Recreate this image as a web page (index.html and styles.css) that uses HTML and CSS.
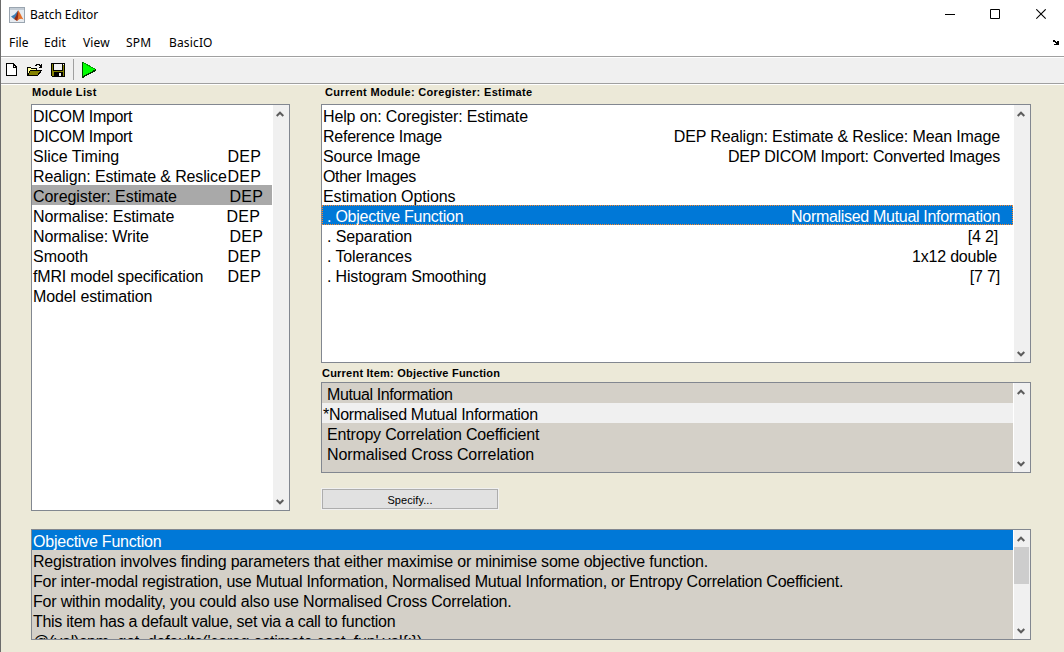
FILE: index.html
```html
<!DOCTYPE html>
<html lang="en">
<head>
<meta charset="utf-8">
<title>Batch Editor</title>
<link rel="stylesheet" href="styles.css">
</head>
<body>
<svg width="0" height="0" class="defs" aria-hidden="true">
  <symbol id="up" viewBox="0 0 8 6"><path d="M.7 5 4 1.7 7.3 5" fill="none" stroke="#5c5c5c" stroke-width="2"/></symbol>
  <symbol id="down" viewBox="0 0 8 6"><path d="M.7 1 4 4.3 7.3 1" fill="none" stroke="#5c5c5c" stroke-width="2"/></symbol>
</svg>
<div class="window">
  <header class="titlebar">
    <svg class="logo" width="16" height="16" viewBox="0 0 16 16">
      <rect x=".5" y=".5" width="15" height="15" fill="#e6ebf0" stroke="#9aa5b0"/>
      <path d="M1 1h14v2H1z" fill="#c3ccd5"/>
      <path d="M2 9.500 5.500 7.500 9 3.500 8 9l-3 3z" fill="#3f7fb5"/>
      <path d="M5 12 7 9l2-5.500 1.500 3.500-.5 4.500L8 14z" fill="#8e2b16"/>
      <path d="M9 3c2 2 3.500 7 5.500 9.500C12 11 10.500 11.500 8 14c1.500-4 1.300-7 1-11z" fill="#e5702a"/>
    </svg>
    <h1 class="title">Batch Editor</h1>
    <div class="controls">
      <svg width="11" height="11" viewBox="0 0 11 11"><path d="M0 5.500h10" stroke="#000"/></svg>
      <svg width="11" height="11" viewBox="0 0 11 11"><path d="M.5.5h9v9h-9z" fill="none" stroke="#000"/></svg>
      <svg width="11" height="11" viewBox="0 0 11 11"><path d="M.3.3l9.400 9.400M9.700.3.3 9.700" stroke="#000" stroke-width="1.100" fill="none"/></svg>
    </div>
  </header>
  <nav class="menubar">
    <span class="m-file">File</span><span class="m-edit">Edit</span><span class="m-view">View</span><span class="m-spm">SPM</span><span class="m-io">BasicIO</span>
    <svg class="dock" width="7" height="5" viewBox="0 0 7 5" shape-rendering="crispEdges"><path d="M0 1h1V0h2v1h1v1h1V1h2v4H2V4h2V3H3V2H1V1z"/></svg>
  </nav>
  <div class="toolbar">
    <svg class="t-new" width="11" height="13" viewBox="0 0 11 13" shape-rendering="crispEdges"><path d="M.5.5h6.500l3.500 3.500v8.500H.5z" fill="#fff" stroke="#000"/><path d="M7 0v4h4" fill="none" stroke="#000"/></svg>
    <svg class="t-open" width="17" height="14" viewBox="0 0 17 14" shape-rendering="crispEdges"><path d="M1.500 12.500v-8h3l1 1h5v2" fill="#ffff9c" stroke="#000"/><path d="M1.500 12.500l3-5h11l-4 5z" fill="#848200" stroke="#000"/><path d="M9 2.500h1v-1h3v1h1v1h1M15.500 1v3H13" fill="none" stroke="#000"/></svg>
    <svg class="t-save" width="14" height="14" viewBox="0 0 14 14" shape-rendering="crispEdges"><path d="M.5.5h13v13h-12l-1-1z" fill="#848200" stroke="#000"/><path d="M3 1h8v6H3z" fill="#f0f0f0"/><path d="M2.500 1v6.500h9V1M3 9h8v5H3z" stroke="#000" fill="none"/><path d="M3 9h8v4H3z"/><path d="M8 10h2v3H8zM12 1h1v1h-1z" fill="#f0f0f0"/></svg>
    <i class="divider"></i>
    <svg class="t-run" width="15" height="16" viewBox="0 0 15 16" shape-rendering="crispEdges"><path d="M1 1v14l13-7z" fill="#0f0"/><path d="M.5 0v15.500" stroke="#004b00"/><path d="M1 .5l13 7" stroke="#00a000"/><path d="M1 15l13-7" stroke="#003800" stroke-width="1.500"/></svg>
  </div>
  <main class="content">
    <div class="panes">
      <section class="modules">
        <h2 class="label">Module List</h2>
        <div class="box">
          <ul class="rows">
            <li><span class="k33">DICOM Import</span></li>
            <li><span class="k33">DICOM Import</span></li>
            <li><span>Slice Timing</span><b class="d0">DEP</b></li>
            <li><span class="k14">Realign: Estimate &amp; Reslice</span><b class="d0">DEP</b></li>
            <li class="current"><span class="k05">Coregister: Estimate</span><b class="d2">DEP</b></li>
            <li><span class="k10">Normalise: Estimate</span><b class="d1">DEP</b></li>
            <li><span class="k14">Normalise: Write</span><b class="d2">DEP</b></li>
            <li><span>Smooth</span><b class="d0">DEP</b></li>
            <li><span class="k17">fMRI model specification</span><b class="d0">DEP</b></li>
            <li><span class="k10">Model estimation</span></li>
          </ul>
          <div class="scroll"><svg width="8" height="6"><use href="#up"/></svg><svg width="8" height="6"><use href="#down"/></svg></div>
        </div>
      </section>
      <section class="detail">
        <h2 class="label inset">Current Module: Coregister: Estimate</h2>
        <div class="box module">
          <ul class="rows">
            <li><span class="k14">Help on: Coregister: Estimate</span></li>
            <li><span class="k25">Reference Image</span><b class="k14">DEP Realign: Estimate &amp; Reslice: Mean Image</b></li>
            <li><span class="k20">Source Image</span><b class="k23">DEP DICOM Import: Converted Images</b></li>
            <li><span class="k33">Other Images</span></li>
            <li><span class="k10">Estimation Options</span></li>
            <li class="selected focus sub"><span class="k25">. Objective Function</span><b class="k31">Normalised Mutual Information</b></li>
            <li class="sub"><span class="k10">. Separation</span><b class="r2 k20">[4 2]</b></li>
            <li class="sub"><span class="k10">. Tolerances</span><b class="r3 k20">1x12 double</b></li>
            <li class="sub"><span class="k17">. Histogram Smoothing</span><b class="k20">[7 7]</b></li>
          </ul>
          <div class="scroll"><svg width="8" height="6"><use href="#up"/></svg><svg width="8" height="6"><use href="#down"/></svg></div>
        </div>
        <h2 class="label item-label">Current Item: Objective Function</h2>
        <div class="box gray item">
          <ul class="rows">
            <li class="sub"><span class="k39">Mutual Information</span></li>
            <li class="light"><span class="k31">*Normalised Mutual Information</span></li>
            <li class="sub"><span class="k17">Entropy Correlation Coefficient</span></li>
            <li class="sub"><span class="k10">Normalised Cross Correlation</span></li>
          </ul>
          <div class="scroll"><svg width="8" height="6"><use href="#up"/></svg><svg width="8" height="6"><use href="#down"/></svg></div>
        </div>
        <button class="specify">Specify...</button>
      </section>
    </div>
    <section class="box gray help">
      <ul class="rows">
        <li class="selected"><span class="k23">Objective Function</span></li>
        <li><span class="k20">Registration involves finding parameters that either maximise or minimise some objective function.</span></li>
        <li><span class="k25">For inter-modal registration, use Mutual Information, Normalised Mutual Information, or Entropy Correlation Coefficient.</span></li>
        <li><span class="k20">For within modality, you could also use Normalised Cross Correlation.</span></li>
        <li><span class="k29">This item has a default value, set via a call to function</span></li>
        <li><span class="k20">@(val)spm_get_defaults('coreg.estimate.cost_fun',val{:})</span></li>
      </ul>
      <div class="scroll"><svg width="8" height="6"><use href="#up"/></svg><i class="thumb"></i><svg width="8" height="6"><use href="#down"/></svg></div>
    </section>
  </main>
</div>
</body>
</html>
```

FILE: styles.css
```css
* { box-sizing: border-box; }
body { margin: 0; font-family: "Liberation Sans", Arial, sans-serif; color: #000; overflow: hidden; }
svg { display: block; flex: none; }
.defs { position: absolute; }
.window { width: 1064px; height: 652px; border-left: 1px solid #6b6b6b; background: #ece9d8; overflow: hidden; }
.titlebar { display: flex; align-items: center; height: 29px; padding: 0 17px 0 8px; background: #fff; }
.title { margin: 0 0 0 5px; font: 12px/16px "Noto Sans", "Open Sans", sans-serif; letter-spacing: -.06px; }
.controls { display: flex; gap: 34px; margin-left: auto; }
.controls svg:last-child { margin-left: 1px; }
.menubar { display: flex; align-items: center; height: 27px; padding: 0 5px 0 8px; background: #fff; font: 12px/16px "Noto Sans", "Open Sans", sans-serif; letter-spacing: .15px; }
.m-file { width: 35px; }
.m-edit { width: 39px; }
.m-view { width: 43px; }
.m-spm { width: 43px; }
.dock { margin-left: auto; }
.toolbar { display: flex; align-items: center; height: 29px; padding: 0 0 2px 5px; background: #f0f0f0; border-top: 1px solid #a0a0a0; border-bottom: 1px solid #fff; box-shadow: inset 0 1px #fff, inset 0 -1px #a0a0a0; }
.t-open { margin-left: 9px; }
.t-save { margin-left: 8px; }
.divider { width: 1px; height: 21px; margin-left: 8px; background: #a0a0a0; }
.t-run { margin-left: 8px; }
.content { padding: 0 33px 0 30px; }
.panes { display: flex; gap: 31px; height: 444px; }
.modules { display: flex; flex-direction: column; width: 259px; height: 426px; }
.modules .box { height: 407px; }
.detail { width: 710px; }
.label { height: 19px; margin: 0; padding: 0 1px; font-size: 11px; line-height: 15px; font-weight: bold; letter-spacing: .33px; white-space: nowrap; }
.inset { padding-left: 4px; }
.item-label { line-height: 21px; letter-spacing: .22px; }
.box { display: flex; border: 1px solid #828790; background: #fff; overflow: hidden; }
.gray .rows { background: #d4d0c8; }
.module { height: 259px; }
.item { height: 91px; }
.help { height: 111px; }
.rows { flex: 1; margin: 0 1px 0 0; padding: 0; list-style: none; overflow: hidden; }
.rows li { display: flex; height: 20px; padding: 1px 13px 0 1px; font-size: 16px; line-height: 21px; white-space: pre; }
.rows b { margin-left: auto; font-weight: normal; }
.modules li { padding-right: 11px; }
.modules b { letter-spacing: .2px; }
.rows .d1 { margin-right: 1px; }
.rows .d2 { margin-right: -2px; }
.rows .r2 { margin-right: 2px; }
.rows .r3 { margin-right: 3px; }
.rows .sub { padding-left: 5px; }
.rows .current { background: #a9a9a9; }
.rows .light { background: #f0f0f0; }
.rows .selected { background: #0078d7; color: #fff; }
.rows .focus { outline: 1px dotted #ff8728; outline-offset: -1px; }

/* Tracking steps, in hundredths of a pixel */
.k05 { letter-spacing: -.05px; }
.k10 { letter-spacing: -.1px; }
.k14 { letter-spacing: -.14px; }
.k17 { letter-spacing: -.17px; }
.k20 { letter-spacing: -.2px; }
.k23 { letter-spacing: -.23px; }
.k25 { letter-spacing: -.25px; }
.k29 { letter-spacing: -.29px; }
.k31 { letter-spacing: -.31px; }
.k33 { letter-spacing: -.33px; }
.k39 { letter-spacing: -.39px; }

.scroll { display: flex; flex-direction: column; align-items: center; justify-content: space-between; width: 16px; padding: 6px 2px 5px 0; background: #f0f0f0; }
.thumb { width: 15px; height: 37px; margin: 5px -1px auto 0; background: #cdcdcd; }
.specify { display: block; width: 176px; height: 20px; margin: 16px 0 0 1px; padding: 2px 0 0; border: 1px solid #adadad; outline: 1px solid #f0f0f0; background: #e1e1e1; color: #000; font: 11px/16px "Liberation Sans", Arial, sans-serif; letter-spacing: .08px; }
```
